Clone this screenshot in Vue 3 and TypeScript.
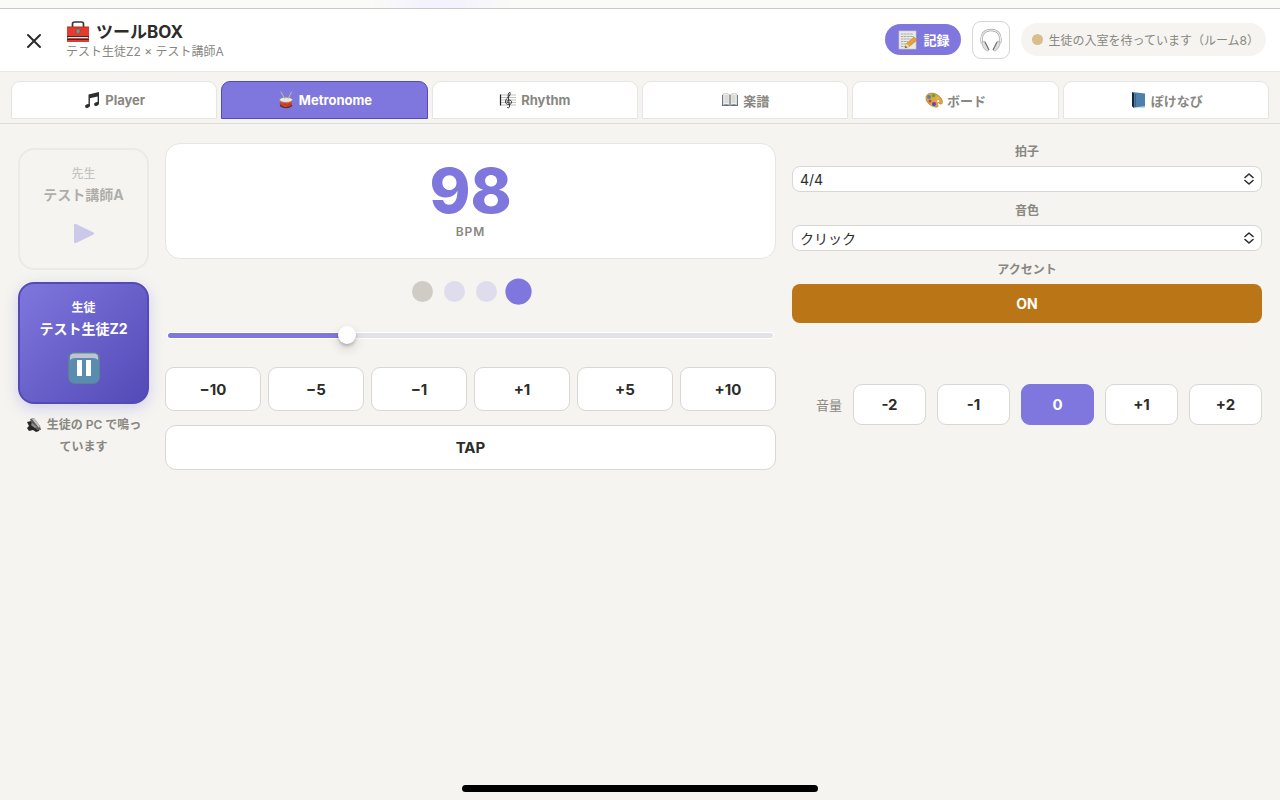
<script setup lang="ts">
import { computed, ref } from 'vue'

const tabs = [
  { id: 'player', label: 'Player' },
  { id: 'metronome', label: 'Metronome' },
  { id: 'rhythm', label: 'Rhythm' },
  { id: 'score', label: '楽譜' },
  { id: 'board', label: 'ボード' },
  { id: 'navi', label: 'ぽけなび' },
]
const activeTab = ref('metronome')

const minBpm = 40
const maxBpm = 240
const bpm = ref(98)
const steps = [-10, -5, -1, 1, 5, 10]
const fill = computed(() => ((Number(bpm.value) - minBpm) / (maxBpm - minBpm)) * 100 + '%')

function changeBpm(step: number) {
  bpm.value = Math.min(maxBpm, Math.max(minBpm, Number(bpm.value) + step))
}
function stepLabel(step: number) {
  return (step < 0 ? '−' : '+') + Math.abs(step)
}

const beats = ['accent', 'idle', 'idle', 'current']
const meter = ref('4/4')
const sound = ref('クリック')
const accent = ref(true)
const volumes = ['-2', '-1', '0', '+1', '+2']
const volume = ref('0')
</script>

<template>
  <div class="app">
    <div class="strip"></div>
    <header class="header">
      <div class="lead">
        <button class="close" type="button" aria-label="閉じる">
          <svg width="16" height="16" viewBox="0 0 16 16"><path d="M2 2l12 12M14 2L2 14" stroke="#2c2c2a" stroke-width="2" stroke-linecap="round" /></svg>
        </button>
        <div class="heading">
          <h1>
            <svg width="24" height="22" viewBox="0 0 24 22">
              <path d="M6.500 6V3q0-2 2-2h7q2 0 2 2v3" fill="none" stroke="#34383a" stroke-width="1.700" />
              <rect x="1" y="6" width="22" height="15" fill="#e33b2e" />
              <path d="M1 6h22" stroke="#b52a22" />
              <path d="M1 15.500h22M1 18.500h22" stroke="#303030" />
              <path d="M2 16.500h20" stroke="#f0dcd8" />
              <path d="M10 8h4v3l-2 2.500-2-2.500z" fill="#8c8a80" stroke="#5b5852" stroke-width=".6" />
            </svg>
            <span>ツールBOX</span>
          </h1>
          <p>テスト生徒Z2 × テスト講師A</p>
        </div>
      </div>
      <button class="record" type="button">
        <svg width="20" height="20" viewBox="0 0 20 20">
          <rect x="1" y="1" width="17" height="18" fill="#e9e9e6" stroke="#c9c9c9" stroke-width=".6" />
          <path d="M3 4h12M3 6.500h13M3 9h10M3 11.500h7M3 14h5M3 16.500h4" stroke="#a0a09c" stroke-width=".9" stroke-dasharray="2.500 .6" />
          <path d="M7 18l1.500-4.500L16 7l3 3-7.500 6.500z" fill="#e5a23a" stroke="#b97b22" stroke-width=".5" />
          <path d="M7 18l1.500-4.500 3 3z" fill="#f2d7a2" /><path d="M7 18l.7-2 1.300 1.200z" fill="#333" />
        </svg>
        <span>記録</span>
      </button>
      <button class="phones" type="button" aria-label="ヘッドホン">
        <svg width="22" height="24" viewBox="0 0 22 24">
          <path d="M2 15C0 6 5 2 11 2S22 6 20 15" fill="none" stroke="#a6a6a6" stroke-width="2.400" />
          <path d="M2 15C0 6 5 2 11 2S22 6 20 15" fill="none" stroke="#ededed" stroke-width="1.200" />
          <path d="M2 14l2.500-1 4.500 9-2 1q-4-2-5-7zM20 14l-2.500-1-4.500 9 2 1q4-2 5-7z" fill="#dedede" stroke="#9c9c9c" stroke-width=".6" />
          <path d="M5 14l4 8M17 14l-4 8" stroke="#777" stroke-width="1.200" />
        </svg>
      </button>
      <div class="status"><i></i><span>生徒の入室を待っています（ルーム8）</span></div>
    </header>

    <nav class="tabs">
      <button v-for="tab in tabs" :key="tab.id" type="button" :class="{ active: tab.id === activeTab }" @click="activeTab = tab.id">
        <svg width="18" height="18" viewBox="0 0 18 18">
          <g v-if="tab.id === 'player'" fill="#2f2f2f">
            <path d="M5.500 3.500L16 1v12h-1.400V5.500L6.900 7.200V15H5.500z" />
            <ellipse cx="4.500" cy="15" rx="2.500" ry="1.800" transform="rotate(-18 4.500 15)" />
            <ellipse cx="13.500" cy="13" rx="2.500" ry="1.800" transform="rotate(-18 13.500 13)" />
          </g>
          <g v-else-if="tab.id === 'metronome'">
            <path d="M3 9v5.500q6 4.500 12 0V9z" fill="#df4427" />
            <path d="M3 12.500l2 3 3-3 2.500 3 2.500-3 2 2.500" fill="none" stroke="#a53220" stroke-width=".9" />
            <path d="M3 14.500q6 4.500 12 0" fill="none" stroke="#493431" stroke-width="1.200" />
            <ellipse cx="9" cy="8.800" rx="6.500" ry="2.600" fill="#eceae6" stroke="#8b8b88" stroke-width=".8" />
            <path d="M4 1l4 7M14.500 1L11 8" stroke="#c6b7ad" stroke-width="1" stroke-linecap="round" />
          </g>
          <g v-else-if="tab.id === 'rhythm'" fill="none">
            <path d="M1 4h16M1 6.500h16M1 9h16M1 11.500h16M1 14h16" stroke="#a5a5a0" stroke-width=".7" />
            <path d="M1.500 3.500v11" stroke="#222" stroke-width="1.200" />
            <path d="M9.800 12c-2.300 0-2-3.300.5-3 3.300.3 3 4.500-.5 4.500-4.300 0-4-4.500-1.300-6.500C11 4.500 11.800 3 10.800 1.200 8.800 2 9 5 9.500 8l1 7c.3 2.200-2 2.200-2.500 1" stroke="#2c2c2c" stroke-width=".95" />
          </g>
          <g v-else-if="tab.id === 'score'">
            <path d="M1 4h16v11H1z" fill="#566b7d" />
            <path d="M2 3q4-1.500 7 .8v10.700Q6 12.500 2 14zM16 3q-4-1.500-7 .8v10.700q3-2 7-.5z" fill="#eeeeeb" stroke="#aaa" stroke-width=".5" />
            <path d="M3.500 5h4M3.500 7h4M3.500 9h4M3.500 11h4M10.500 5h4M10.500 7h4M10.500 9h4M10.500 11h4" stroke="#b6b6b3" stroke-width=".7" />
            <path d="M9 4v10.500" stroke="#77736e" />
          </g>
          <g v-else-if="tab.id === 'board'">
            <path d="M1 6C2 1 10 1 14 5c4 3.500 4 7 2.500 8-1.500 1-2-1.500-3.500-1-1.500.6 1 3-.5 4C8 17 0 12 1 6z" fill="#e1a345" stroke="#a97227" stroke-width=".6" />
            <circle cx="4" cy="6" r="2" fill="#4c86ac" /><circle cx="8.500" cy="4.500" r="1.800" fill="#4faf36" />
            <circle cx="12.500" cy="7" r="1.200" fill="#e8bb38" /><circle cx="5" cy="10" r="1.500" fill="#cd4637" />
            <circle cx="9" cy="13" r="2" fill="#5847be" /><circle cx="13.200" cy="10.200" r="1.100" fill="#fff" />
          </g>
          <g v-else>
            <path d="M3 1l13 1.500v14L5 17l-2-2z" fill="#4e80ac" /><path d="M3 1l2 1.500V17l-2-2z" fill="#172438" />
            <path d="M5 16.500l11-1.300v1.300L5 17.500z" fill="#dce5eb" /><path d="M6.500 3v13" stroke="#3b6289" />
          </g>
        </svg>
        <span>{{ tab.label }}</span>
      </button>
    </nav>

    <main class="main">
      <aside class="players">
        <button class="player teacher" type="button" disabled>
          <small>先生</small>
          <strong>テスト講師A</strong>
          <svg width="32" height="32" viewBox="0 0 32 32"><path d="M6 7v17q0 2 2 1l17.500-8.500q1.500-1 0-2L8 6q-2-1-2 1z" fill="#7f77dd" /></svg>
        </button>
        <button class="player student" type="button">
          <small>生徒</small>
          <strong>テスト生徒Z2</strong>
          <svg width="32" height="32" viewBox="0 0 32 32">
            <rect x=".5" y=".5" width="31" height="31" rx="6" fill="#5a8bb0" stroke="#607f8b" />
            <path d="M2 8V5q0-3.500 4-3.500h20q4 0 4 3.500v3q-2-2-5-2H7Q4 6 2 8z" fill="#bfc3d6" />
            <path d="M9 8h5v16H9zM18 8h5v16h-5z" fill="#fff" />
          </svg>
        </button>
        <p class="hint">
          <svg width="16" height="16" viewBox="0 0 16 16">
            <path d="M1 5l4-1 3 4 6 3-1 3-3 1-3-2-4 1-2-3 2-2z" fill="#272727" />
            <path d="M4 2l4-1 6 8 1 4-4 0-5-5z" fill="#5d5d5d" />
            <path d="M6 2l2-1 6 8-1 2z" fill="#c5c5c2" />
            <path d="M6 6l5 4-2 1-4-3z" fill="#8f8f8c" />
          </svg>
          生徒の PC で鳴っています
        </p>
      </aside>

      <section class="tempo">
        <div class="bpm"><output>{{ bpm }}</output><span>BPM</span></div>
        <div class="beats"><i v-for="(beat, n) in beats" :key="n" :class="beat"></i></div>
        <input v-model="bpm" class="slider" type="range" :min="minBpm" :max="maxBpm" aria-label="BPM" :style="{ '--fill': fill }" />
        <div class="steps">
          <button v-for="step in steps" :key="step" type="button" @click="changeBpm(step)">{{ stepLabel(step) }}</button>
        </div>
        <button class="tap" type="button">TAP</button>
      </section>

      <section class="settings">
        <label for="meter">拍子</label>
        <div class="select">
          <select id="meter" v-model="meter"><option>4/4</option><option>3/4</option><option>2/4</option></select>
          <svg width="10" height="12" viewBox="0 0 10 12"><path d="M1 4.500l4-3.500 4 3.500M1 7.500l4 3.500 4-3.500" /></svg>
        </div>
        <label for="sound">音色</label>
        <div class="select">
          <select id="sound" v-model="sound"><option>クリック</option><option>ベル</option></select>
          <svg width="10" height="12" viewBox="0 0 10 12"><path d="M1 4.500l4-3.500 4 3.500M1 7.500l4 3.500 4-3.500" /></svg>
        </div>
        <label for="accent">アクセント</label>
        <button id="accent" class="accent-toggle" type="button" :aria-pressed="accent" @click="accent = !accent">{{ accent ? 'ON' : 'OFF' }}</button>
        <div class="volume" role="group" aria-labelledby="volume-label">
          <span id="volume-label">音量</span>
          <div class="levels">
            <button v-for="v in volumes" :key="v" type="button" :class="{ active: v === volume }" @click="volume = v">{{ v }}</button>
          </div>
        </div>
      </section>
    </main>
    <div class="home"></div>
  </div>
</template>

<style>
body { margin: 0; background: #f5f4f0; }
</style>

<style scoped>
* { box-sizing: border-box; }
.app {
  min-height: 100vh;
  background: #f5f4f0;
  color: #2c2c2a;
  font-family: Inter, "Noto Sans CJK JP", sans-serif;
  font-size: 14px;
}
button, select { font: inherit; color: inherit; margin: 0; cursor: pointer; }
h1, p { margin: 0; }
svg { display: block; flex: none; }
.strip {
  height: 9px;
  background: linear-gradient(90deg, #fafaf8 29%, #f4f3fd 33%, #f4f3fd 36%, #fafaf8 40%);
  border-bottom: 1px solid #c9c9c0;
}
.header {
  display: flex;
  align-items: center;
  height: 63px;
  padding: 0 14px 1px 18px;
  background: #fff;
  border-bottom: 1px solid #e8e7e4;
}
.lead { flex: 1; display: flex; align-items: center; gap: 16px; padding-top: 3px; }
.close { display: grid; place-items: center; width: 32px; height: 32px; padding: 0; border: 0; background: none; }
h1 { display: flex; align-items: center; gap: 6px; font-size: 17px; line-height: 22px; font-weight: 700; }
.heading p { font-size: 12px; line-height: 18px; color: #888780; }
.record {
  display: flex;
  align-items: center;
  gap: 6px;
  height: 31px;
  padding: 0 11px 0 13px;
  border: 0;
  border-radius: 16px;
  background: #7f77dd;
  color: #fff;
  font-size: 13px;
  font-weight: 700;
}
.phones {
  display: grid;
  place-items: center;
  width: 38px;
  height: 38px;
  margin: 0 11px;
  padding: 0;
  border: 1px solid #d6d5d3;
  border-radius: 9px;
  background: #fff;
}
.status {
  display: flex;
  align-items: center;
  gap: 6px;
  height: 33px;
  padding: 0 7px 0 11px;
  border-radius: 17px;
  background: #f5f4f0;
  color: #888780;
  font-size: 12px;
}
.status i { width: 11px; height: 11px; border-radius: 50%; background: #d9bd8c; }
.tabs {
  display: flex;
  gap: 4px;
  height: 52px;
  padding: 9px 11px 4px;
  border-bottom: 1px solid #deddd9;
}
.tabs button {
  flex: 1 1 0;
  display: flex;
  align-items: center;
  justify-content: center;
  gap: 4px;
  padding: 0;
  border: 1px solid #e6e5e3;
  border-radius: 9px 9px 0 0;
  background: #fff;
  color: #888780;
  font-size: 13px;
  font-weight: 700;
}
.tabs .active { border-color: #534ab7; background: #7f77dd; color: #fff; }
.main {
  display: grid;
  grid-template-columns: 131px 13fr 10fr;
  gap: 16px;
  padding: 19px 18px;
}
.players { display: flex; flex-direction: column; gap: 12px; padding-top: 5px; }
.player {
  display: flex;
  flex-direction: column;
  align-items: center;
  height: 122px;
  padding: 15px 0 0;
  border: 2px solid #d9d8da;
  border-radius: 16px;
  background: transparent;
}
.player small { font-size: 12px; line-height: 18px; font-weight: 500; }
.player strong { margin-bottom: 11px; font-size: 14px; line-height: 24px; font-weight: 700; }
.teacher { opacity: .35; }
.teacher small { color: #6d6c66; }
.student {
  border-color: #534ab7;
  background: linear-gradient(135deg, #7f77dd, #534ab7);
  color: #fff;
  box-shadow: 0 4px 14px rgba(127, 119, 221, .3);
}
.student small { font-weight: 700; }
.hint { margin-top: -2px; padding: 0 3px; text-align: center; font-size: 12px; line-height: 22px; font-weight: 600; color: #888780; }
.hint svg { display: inline-block; margin-right: 2px; vertical-align: -4px; }
.tempo { display: flex; flex-direction: column; min-width: 0; }
.bpm {
  display: flex;
  flex-direction: column;
  align-items: center;
  height: 116px;
  padding-top: 15px;
  border: 1px solid #e6e5e3;
  border-radius: 15px;
  background: #fff;
}
.bpm output { font-size: 62px; line-height: 64px; font-weight: 800; color: #7f77dd; }
.bpm span { font-size: 12px; line-height: 18px; font-weight: 600; letter-spacing: 1px; color: #888780; }
.beats { display: flex; align-items: center; justify-content: center; gap: 11px; height: 65px; }
.beats i { width: 21px; height: 21px; border-radius: 50%; background: #dfdced; }
.beats .accent { background: #cfccc6; }
.beats .current { background: #7f77dd; transform: scale(1.25); }
.slider { -webkit-appearance: none; appearance: none; height: 22px; margin: 0 3px; background: none; }
.slider::-webkit-slider-runnable-track {
  height: 5px;
  border-radius: 3px;
  background: linear-gradient(90deg, #7f77dd var(--fill), #e3e2e7 var(--fill));
  box-shadow: 0 0 0 1px #fff;
}
.slider::-webkit-slider-thumb {
  -webkit-appearance: none;
  width: 18px;
  height: 18px;
  margin-top: -7px;
  border-radius: 50%;
  background: #fff;
  box-shadow: 0 2px 3px rgba(0, 0, 0, .2), 0 5px 12px rgba(0, 0, 0, .15);
}
.steps { display: grid; grid-template-columns: repeat(6, 1fr); gap: 7px; margin: 21px 0 14px; }
.steps button, .tap, .levels button {
  height: 44px;
  padding: 0;
  border: 1px solid #d8d7d4;
  border-radius: 9px;
  background: #fff;
  font-size: 15px;
  font-weight: 700;
}
.tap { height: 45px; border-radius: 11px; }
.settings { display: flex; flex-direction: column; min-width: 0; }
.settings label { height: 23px; line-height: 18px; text-align: center; font-size: 12px; font-weight: 600; color: #888780; }
.select { position: relative; margin-bottom: 10px; }
.select select {
  -webkit-appearance: none;
  appearance: none;
  display: block;
  width: 100%;
  height: 26px;
  padding: 0 24px 0 7px;
  border: 1px solid #d8d7d4;
  border-radius: 8px;
  background: #fff;
  font-size: 14px;
}
.select svg { position: absolute; right: 8px; top: 7px; pointer-events: none; fill: none; stroke: #2c2c2a; stroke-width: 1.6; stroke-linecap: round; stroke-linejoin: round; }
.accent-toggle { height: 39px; border: 0; border-radius: 8px; background: #ba7517; color: #fff; font-weight: 700; }
.volume { display: flex; align-items: center; gap: 11px; margin-top: 61px; padding-left: 24px; font-size: 13px; color: #888780; }
.levels { flex: 1; display: grid; grid-template-columns: repeat(5, 1fr); gap: 11px; color: #2c2c2a; }
.levels button { height: 41px; }
.levels .active { border-color: #7f77dd; background: #7f77dd; color: #fff; }
.home { position: fixed; left: 50%; bottom: 8px; width: 356px; height: 7px; margin-left: -178px; border-radius: 4px; background: #000; }
</style>
